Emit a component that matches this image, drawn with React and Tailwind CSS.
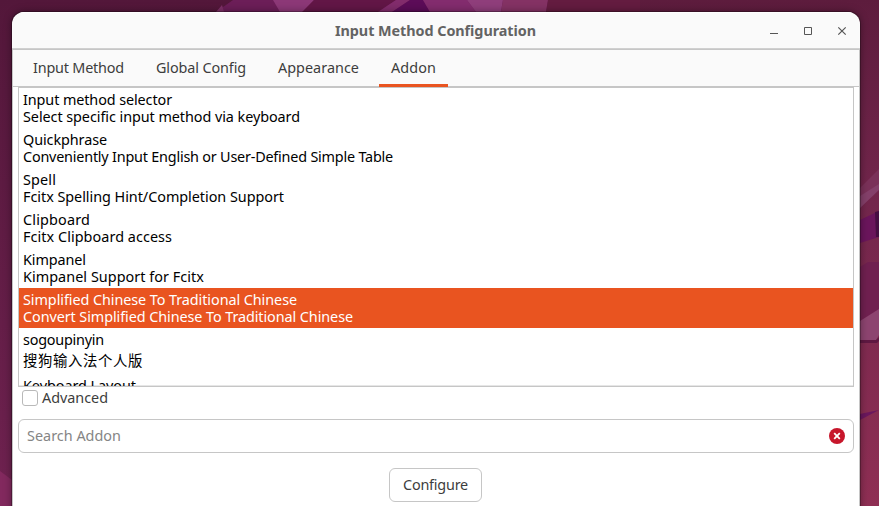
import { useLayoutEffect, useRef, useState } from "react";

const addons = [
  { name: ["Input method selector", 149], detail: ["Select specific input method via keyboard", 277] },
  { name: ["Quickphrase", 84], detail: ["Conveniently Input English or User-Defined Simple Table", 370] },
  { name: ["Spell", 33], detail: ["Fcitx Spelling Hint/Completion Support", 261] },
  { name: ["Clipboard", 67], detail: ["Fcitx Clipboard access", 149] },
  { name: ["Kimpanel", 63], detail: ["Kimpanel Support for Fcitx", 181] },
  {
    name: ["Simplified Chinese To Traditional Chinese", 274],
    detail: ["Convert Simplified Chinese To Traditional Chinese", 330],
    selected: true,
  },
  { name: ["sogoupinyin", 81], detail: ["搜狗输入法个人版", 120], tall: true },
  { name: ["Keyboard Layout", 113] },
];

const tabs = [
  { label: "Input Method", width: 91 },
  { label: "Global Config", width: 90 },
  { label: "Appearance", width: 81 },
  { label: "Addon", width: 45, active: true },
];

// Spreads the letters of a single-line label evenly over a given width.
function Label({ width, children, className = "" }) {
  const ref = useRef(null);
  const [spacing, setSpacing] = useState(0);
  useLayoutEffect(() => {
    const natural = ref.current.getBoundingClientRect().width;
    setSpacing((width - natural) / children.length);
  }, [width, children]);
  return (
    <span ref={ref} className={`inline-block whitespace-pre ${className}`} style={{ letterSpacing: `${spacing}px` }}>
      {children}
    </span>
  );
}

function Wallpaper() {
  return (
    <svg className="absolute inset-0" width="879" height="506" viewBox="0 0 879 506">
      <defs>
        <linearGradient id="left" x1="0" y1="0" x2="0" y2="1">
          <stop offset="0" stopColor="#53173a" />
          <stop offset="1" stopColor="#6f2250" />
        </linearGradient>
        <linearGradient id="right" x1="0" y1="0" x2="0" y2="1">
          <stop offset="0" stopColor="#5d1c3d" />
          <stop offset="0.4" stopColor="#73264c" />
          <stop offset="1" stopColor="#8f2f54" />
        </linearGradient>
      </defs>
      <rect width="440" height="506" fill="url(#left)" />
      <rect x="440" width="439" height="506" fill="url(#right)" />
      <path d="M233 0L216 12H560V0Z" fill="#6c1e58" />
      <path d="M222 5L216 12H224Z" fill="#7f3068" />
      <path d="M273 0L280 12H303L314 0Z" fill="#8c3877" />
      <path d="M314 0L302 12H378L396 0Z" fill="#621646" />
      <path d="M396 0L378 12H392L410 0Z" fill="#822c6c" />
      <path d="M410 0L392 12H430L423 0Z" fill="#5c0c58" />
      <path d="M423 0L430 12H476L467 0Z" fill="#832c6e" />
      <path d="M467 0L476 12H501L503 0Z" fill="#8f3e7b" />
      <path d="M503 0L501 12H546L548 0Z" fill="#843264" />
      <path d="M548 0L546 12H640V0Z" fill="#641c40" />
      <path d="M0 471L12 480V506H0Z" fill="#82295e" />
      <path d="M879 169L860 188V208L879 188Z" fill="#7a3159" />
      <path d="M879 184L860 196V208L879 190Z" fill="#84406a" />
      <path d="M860 220L879 211V237L860 243Z" fill="#6b155c" />
      <path d="M875 212L879 211V237L876 237Z" fill="#470e42" />
      <path d="M860 267L868 262H879V310L860 327Z" fill="#702050" />
      <path d="M860 321L879 309V335L876 340H860Z" fill="#8d4470" />
      <path d="M860 340H876L879 337V341L877 343H860Z" fill="#5f1842" />
      <path d="M860 414L879 410L860 420Z" fill="#6b175e" />
    </svg>
  );
}

function TitleBar() {
  return (
    <div className="flex h-9 shrink-0 items-center border-t border-white">
      <div className="w-[323px]" />
      <Label width={201} className="font-bold text-[#636363]">Input Method Configuration</Label>
      <svg className="ml-auto mr-3" width="78" height="12" viewBox="0 0 78 12" fill="none" stroke="#565656">
        <path d="M0 8.5H8" />
        <path d="M34.5 2.5H41.5V9.5H34.5Z" />
        <path d="M68.3 2.3L75.7 9.7M75.7 2.3L68.3 9.7" strokeWidth="1.2" />
      </svg>
    </div>
  );
}

function AddonRow({ name, detail, selected, tall }) {
  return (
    <div className={`flex flex-col px-1 pb-[3px] leading-[17px] ${detail ? "pt-[3px]" : "pt-1"} ${selected ? "bg-[#e95420] text-white" : "text-black"}`}>
      <div className="h-[17px]"><Label width={name[1]}>{name[0]}</Label></div>
      {detail && (
        <div className={tall ? "h-[22px] leading-[25px]" : "h-[17px]"}>
          <Label width={detail[1]}>{detail[0]}</Label>
        </div>
      )}
    </div>
  );
}

export default function App() {
  return (
    <div className="relative h-[506px] w-[879px] overflow-hidden font-['Noto_Sans','Noto_Sans_CJK_SC',sans-serif] text-[14.4px] text-[#3d3d3d]">
      <Wallpaper />
      <div className="relative mt-3 ml-3 flex h-[510px] w-[848px] flex-col overflow-hidden rounded-t-xl bg-[#fafafa] shadow-[0_0_8px_rgba(0,0,0,0.4),0_0_0_1px_rgba(0,0,0,0.25)]">
        <TitleBar />
        <div className="h-px shrink-0 bg-[#d0d0d0]" />
        <div className="flex grow flex-col border border-b-0 border-[#c6c6c6] bg-white">
          <div className="flex h-[37px] shrink-0 gap-2 border-b border-[#c6c6c6] bg-[#fafafa] pl-2">
            {tabs.map(({ label, width, active }) => (
              <div key={label} className={`-mb-px flex h-[37px] items-center px-3 ${active ? "border-b-3 border-[#e95420] pt-px" : "pb-0.5"}`}>
                <Label width={width}>{label}</Label>
              </div>
            ))}
          </div>
          <div className="mx-[5px] h-[300px] shrink-0 overflow-hidden border border-[#c6c6c6] shadow-[inset_0_-1px_0_#e6e6e6]">
            {addons.map((addon) => <AddonRow key={addon.name[0]} {...addon} />)}
          </div>
          <div className="mt-[3px] ml-[9px] flex h-4 items-center gap-1">
            <div className="size-4 rounded-[3px] border border-[#b9b9b9] bg-white" />
            <Label width={66}>Advanced</Label>
          </div>
          <div className="mx-[5px] mt-[13px] flex h-[34px] items-center justify-between rounded-md border border-[#c6c6c6] px-2">
            <Label width={94} className="text-[#858585]">Search Addon</Label>
            <svg width="16" height="16" viewBox="0 0 16 16">
              <circle cx="8" cy="8" r="8" fill="#c7162b" />
              <path d="M5.2 5.2L10.8 10.8M10.8 5.2L5.2 10.8" stroke="white" strokeWidth="1.8" />
            </svg>
          </div>
          <div className="mt-[15px] mr-px flex h-[34px] w-[93px] items-center justify-center self-center rounded-md border border-[#c6c6c6]">
            <Label width={65}>Configure</Label>
          </div>
        </div>
      </div>
    </div>
  );
}
